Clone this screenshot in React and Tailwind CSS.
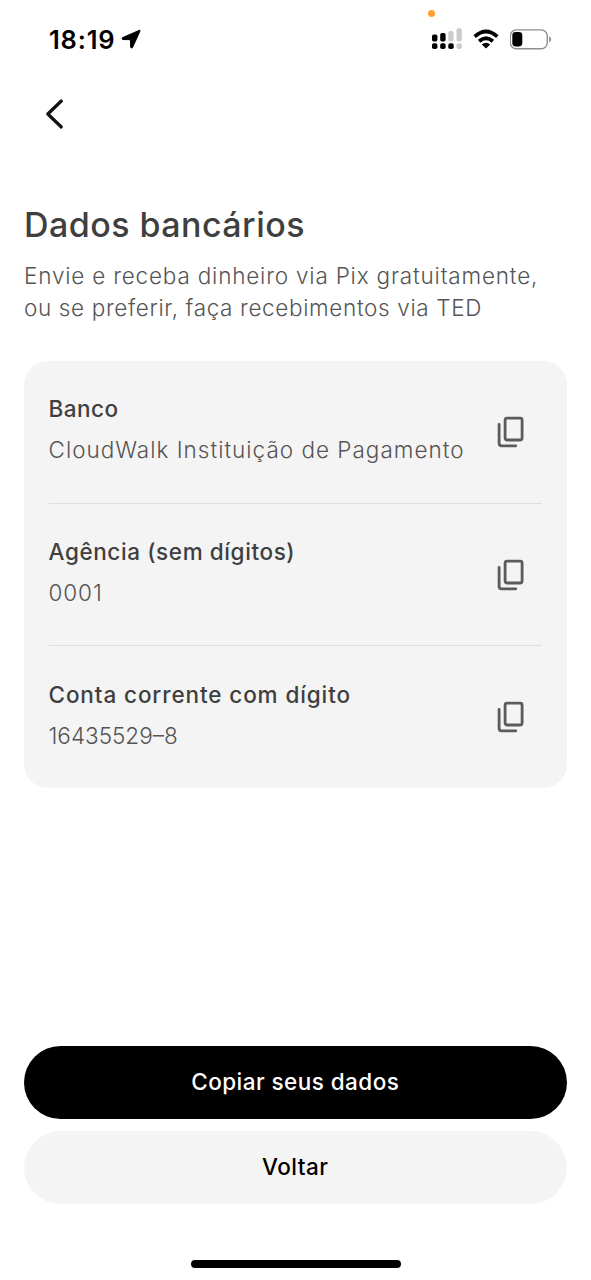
import React from "react";

const accountData = [
  { label: "Banco", value: "CloudWalk Instituição de Pagamento", labelClass: "tracking-[0.5px]", valueClass: "tracking-[1px]" },
  { label: "Agência (sem dígitos)", value: "0001", labelClass: "tracking-[0.6px]", valueClass: "tracking-[0.9px]" },
  { label: "Conta corrente com dígito", value: "16435529–8", labelClass: "tracking-[0.89px]", valueClass: "tracking-[0px]" },
];

function CopyIcon() {
  return (
    <svg className="h-8 w-7" viewBox="0 0 28 32" fill="none" stroke="#5b5b5b" strokeWidth="2.8">
      <rect x="8.1" y="2.2" width="17" height="21.8" rx="2" />
      <path d="M2.1 8.3V27.3Q2.1 29.8 4.6 29.8H18.8" strokeLinecap="round" />
    </svg>
  );
}

function StatusBar() {
  return (
    <div className="relative flex h-[78px] items-center justify-between pr-[39px] pl-[49px]">
      <div className="flex items-center gap-[6px]">
        <span className="pt-[2px] font-[Inter,sans-serif] text-[25.5px] leading-8 font-semibold tracking-[0.8px] text-black">
          18:19
        </span>
        <svg className="h-5 w-5" viewBox="0 0 20 20">
          <path
            d="M18.6 1.2 1.4 8.7Q.5 10.4 1.8 10.5L9.4 10.7 9.7 18.2Q10.3 19.8 11.5 18.6L19 2Q19.2 1 18.6 1.2Z"
            fill="#000"
            stroke="#000"
            strokeLinejoin="round"
          />
        </svg>
      </div>

      <div className="flex items-center">
        <svg className="h-[22px] w-[30px]" viewBox="0 0 30 22">
          <rect x="0" y="6.6" width="5.4" height="6.9" rx="1.7" />
          <rect x="8.2" y="5" width="5.4" height="8.5" rx="1.7" />
          <rect x="16.3" y="3" width="5.3" height="10.5" rx="1.7" fill="#ccc" />
          <rect x="24.5" y="0.3" width="5.3" height="13.2" rx="1.7" fill="#ccc" />
          <rect x="0" y="15.3" width="5.4" height="5.8" rx="1.8" />
          <rect x="8.2" y="15.3" width="5.4" height="5.8" rx="1.8" />
          <rect x="16.3" y="15.3" width="5.4" height="5.8" rx="1.8" />
          <rect x="24.5" y="15.3" width="5.3" height="5.8" rx="1.8" fill="#ccc" />
        </svg>
        <svg className="ml-[11px] h-5 w-[26px]" viewBox="0 0 26 20" fill="none" stroke="#000" strokeWidth="3.8">
          <path d="M1.7 7.6Q13-2.4 24.3 7.6" />
          <path d="M6.1 12.2Q13 6.2 19.9 12.2" />
          <path d="M13 19.6 8.8 15.5Q13 11.9 17.2 15.5Z" fill="#000" stroke="none" />
        </svg>
        <svg className="ml-[11px] h-[21px] w-[42px]" viewBox="0 0 42 21">
          <rect x="0.3" y="0.9" width="37" height="18.8" rx="6" fill="none" stroke="#8d8d8d" strokeWidth="1.4" />
          <rect x="2.3" y="3" width="10" height="14.4" rx="3.4" />
          <path d="M39.1 7.2Q41.1 8 41.1 10.3T39.1 13.4Z" fill="#8d8d8d" />
        </svg>
      </div>

      {/* Mic in use indicator */}
      <span className="absolute top-[10px] left-[428px] h-[7px] w-[7px] rounded-full bg-[#ff9f2f]"></span>
    </div>
  );
}

export default function App() {
  return (
    <div className="flex h-[1280px] w-[591px] flex-col bg-white font-[Inter,sans-serif]">
      <StatusBar />

      {/* Back */}
      <button className="mt-[20px] ml-[45px] h-8 w-5" aria-label="Voltar">
        <svg className="h-8 w-5" viewBox="0 0 20 32" fill="none" stroke="#111" strokeWidth="3.2">
          <path d="M16.3 3 2.8 16 16.3 29" strokeLinecap="round" strokeLinejoin="round" />
        </svg>
      </button>

      {/* Title */}
      <header className="mt-[75px] pl-[24px]">
        <h1 className="text-[34px] leading-[40px] font-medium tracking-[0.45px] whitespace-nowrap text-[#3f3f3f]">
          Dados bancários
        </h1>
        <p className="mt-[15px] text-[22.5px] leading-8 font-light whitespace-nowrap text-[#555]">
          <span className="tracking-[0.81px]">Envie e receba dinheiro via Pix gratuitamente,</span>
          <br />
          <span className="tracking-[0.64px]">ou se preferir, faça recebimentos via TED</span>
        </p>
      </header>

      {/* Account data */}
      <section className="mr-[24.5px] ml-[24px] mt-[37px] flex h-[427px] flex-col rounded-[24px] bg-[#f4f4f4] px-[24.5px]">
        {accountData.map((item) => (
          <div
            key={item.label}
            className="flex flex-1 items-center justify-between border-b-[1.5px] border-[#dedede] pr-[17px] last:border-b-0"
          >
            <div className="pb-[4px] whitespace-nowrap">
              <p className={`text-[22.5px] leading-8 font-medium text-[#3f3f3f] ${item.labelClass}`}>{item.label}</p>
              <p className={`mt-[9px] text-[22.5px] leading-8 font-light text-[#555] ${item.valueClass}`}>{item.value}</p>
            </div>
            <button aria-label={`Copiar ${item.label}`}>
              <CopyIcon />
            </button>
          </div>
        ))}
      </section>

      {/* Actions */}
      <div className="mt-auto mr-[24.5px] ml-[24px] flex flex-col gap-[12px]">
        <button className="h-[73px] rounded-full bg-black pb-[2px] text-[22.5px] font-medium tracking-[0.45px] text-white">
          Copiar seus dados
        </button>
        <button className="h-[73px] rounded-full bg-[#f4f4f4] pb-[2px] text-[22.5px] font-medium tracking-[0.5px] text-black">
          Voltar
        </button>
      </div>

      <div className="mx-auto mt-[56px] mb-[12px] h-2 w-[210px] rounded-full bg-black"></div>
    </div>
  );
}
